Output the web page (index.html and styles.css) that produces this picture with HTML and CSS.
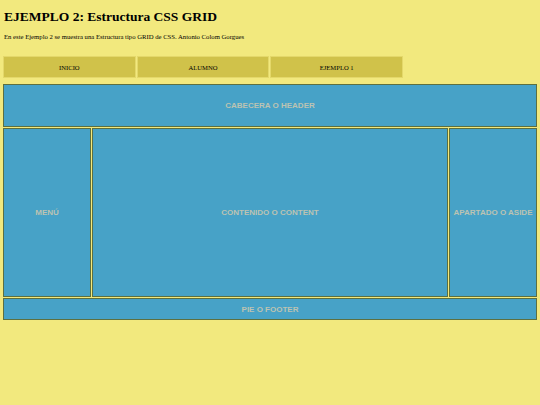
FILE: index.html
```html
<!DOCTYPE html>
<html lang="es">
<head>
<meta charset="utf-8">
<title>Ejemplo 2</title>
<link rel="stylesheet" href="styles.css">
</head>
<body>
<h1 class="title">EJEMPLO 2: Estructura CSS GRID</h1>
<p class="intro">En este Ejemplo 2 se muestra una Estructura tipo GRID de CSS. Antonio Colom Gorgues</p>
<nav class="nav">
  <a class="nav-item">INICIO</a>
  <a class="nav-item">ALUMNO</a>
  <a class="nav-item">EJEMPLO 1</a>
</nav>
<div class="grid">
  <div class="cell header">CABECERA O HEADER</div>
  <div class="cell menu">MENÚ</div>
  <div class="cell content">CONTENIDO O CONTENT</div>
  <div class="cell aside">APARTADO O ASIDE</div>
  <div class="cell footer">PIE O FOOTER</div>
</div>
</body>
</html>
```
FILE: styles.css
```css
html, body {
  margin: 0;
  padding: 0;
}
body {
  background: #f2e97e;
  padding: 3px;
  font-family: "Liberation Serif", "Times New Roman", serif;
  color: #000;
}
.title {
  margin: 6px 0 0 1px;
  font-size: 13.5px;
  line-height: 16px;
  font-weight: bold;
}
.intro {
  margin: 7px 0 0 1px;
  font-size: 6.7px;
  line-height: 9px;
}
.nav {
  display: flex;
  gap: 1px;
  margin-top: 15px;
  width: 400px;
}
.nav-item {
  flex: 1;
  height: 22px;
  box-sizing: border-box;
  border: 1px solid #e4d86a;
  background: #d0c24a;
  font-size: 6.6px;
  display: flex;
  align-items: center;
  justify-content: center;
}
.grid {
  margin-top: 6px;
  display: grid;
  grid-template-columns: 88px 1fr 88px;
  grid-template-rows: 43px 169px 22px;
  gap: 1px;
}
.cell {
  box-sizing: border-box;
  border: 1px solid #5d7040;
  background: #47a2c7;
  color: #bcc3b2;
  font-family: "Liberation Sans", Arial, sans-serif;
  font-weight: bold;
  font-size: 8px;
  display: flex;
  align-items: center;
  justify-content: center;
  text-align: center;
}
.header { grid-column: 1 / 4; }
.footer { grid-column: 1 / 4; }
```
